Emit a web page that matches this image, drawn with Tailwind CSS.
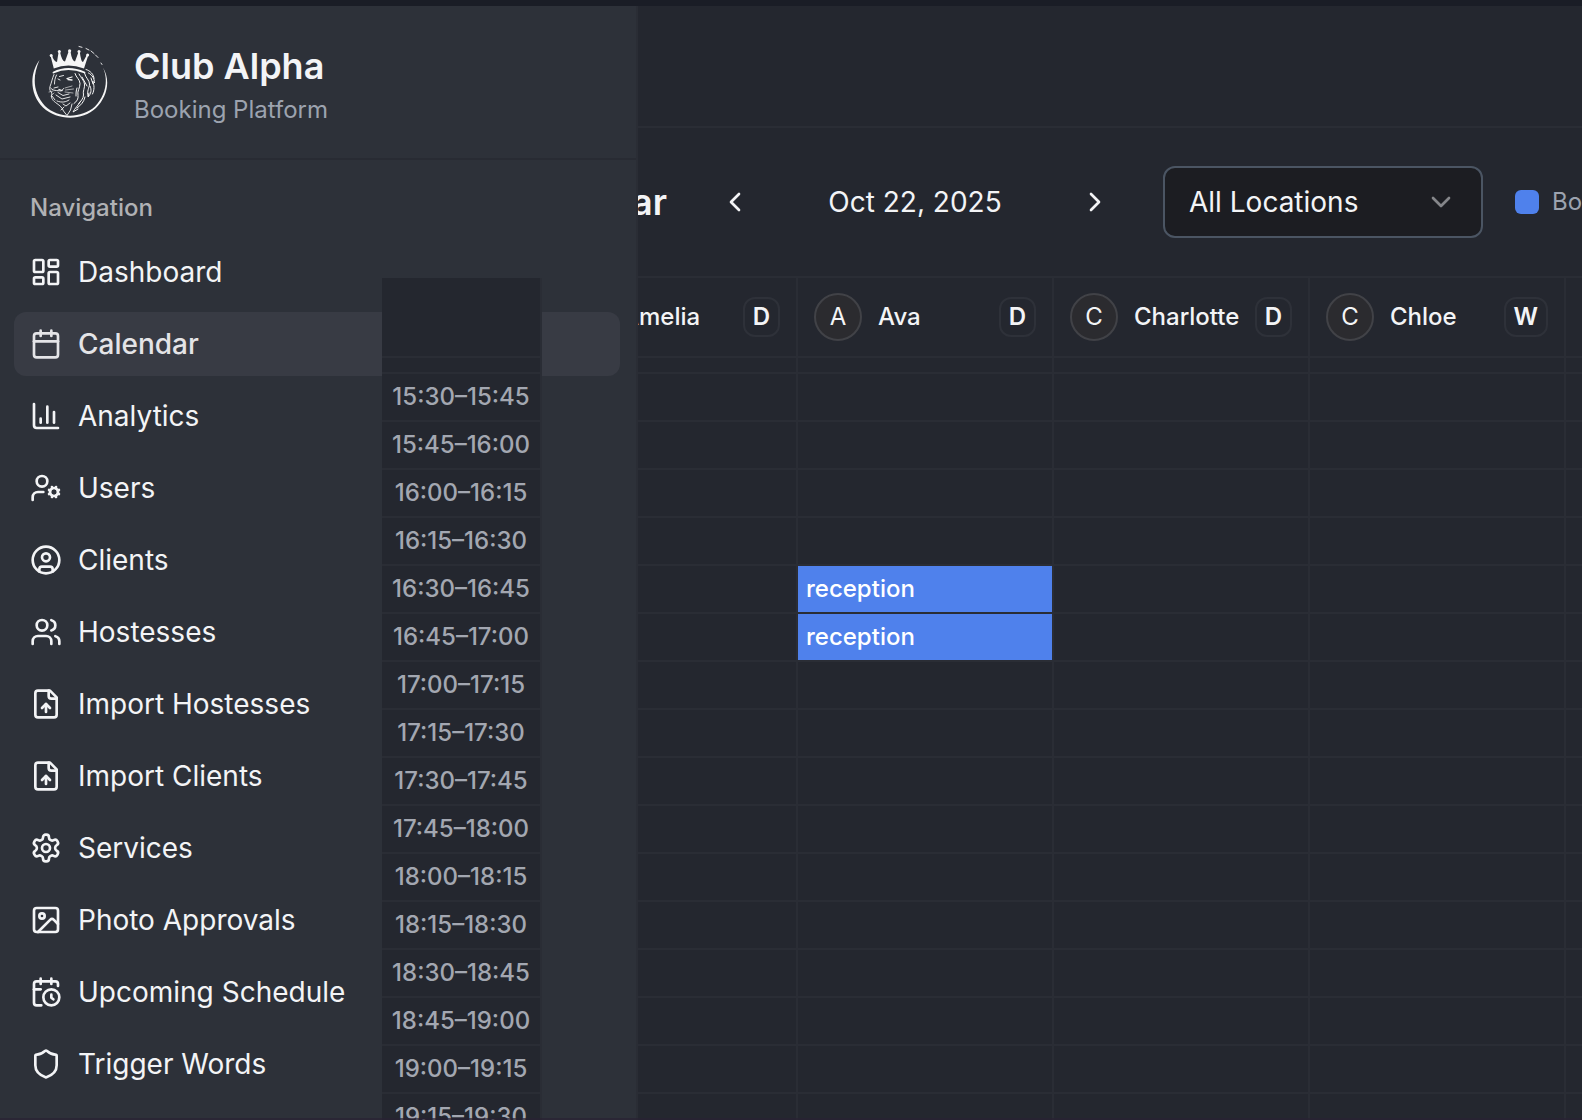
<!DOCTYPE html>
<html lang="en">
<head>
<meta charset="utf-8">
<title>Club Alpha</title>
<script src="https://cdn.jsdelivr.net/npm/@tailwindcss/browser@4"></script>
</head>
<body class="w-[1582px] h-[1120px] overflow-hidden bg-[#24272f] font-[Inter,sans-serif] text-[#f3f4f6]">
<div class="relative flex flex-col h-[1120px] overflow-hidden">
  <div class="h-[6px] shrink-0 bg-[#1a1d26]"></div>
  <div class="flex flex-1 min-h-0">

    <aside class="relative z-10 w-[638px] shrink-0 border-r-2 border-[#2a2d35] bg-[#2d3139]">
      <div class="h-[154px] flex items-start gap-6 pl-[30px] pt-[36px] border-b-2 border-[#282b33]">
        <svg class="w-20 h-20 shrink-0" viewBox="0 0 80 80" fill="none" stroke="#f6f6f6" stroke-linecap="round" stroke-linejoin="round">
          <path stroke="none" fill="#f6f6f6" d="M9.500 18C-1 32 0 53 13 65.500C28 79 52 79 66 66C77 55 81 39 73 25.500C79 39 75 54 65 64.500C51 77 28 76.500 15 64C3 51 2 35 9.500 18Z"/>
          <path stroke-width=".9" d="M49 4.500l3 .8M56 6.500l3 1.500M61 9l3 2.500M65.500 13l2.500 2.500M71 21l1 1.500"/>
          <path stroke="none" fill="#f6f6f6" d="M23.800 26.500L20.600 14L22 13.500Q24 20 27 20L28.600 10H30Q32 19.500 35 19.500L38.800 9H40.400Q42 19.500 45 19.500L48.500 10H49.800Q51 20 53 20L56.800 13L58.200 13.500L54 26.500Q38 20.500 23.800 26.500Z"/>
          <g fill="#f6f6f6" stroke="none"><circle cx="21.200" cy="13.500" r="1.500"/><circle cx="29.300" cy="9.500" r="1.500"/><circle cx="39.600" cy="8.800" r="1.600"/><circle cx="49" cy="9.500" r="1.500"/><circle cx="57.600" cy="13" r="1.500"/></g>
          <path stroke-width="1.800" d="M23.500 30.500Q38 23.500 54.500 30.500"/>
          <path stroke-width=".9" d="M24 32.500C22 37 21.500 41 20 44.500C19 47.500 20.500 49.500 22 51C20.500 55 22 58 25.500 60.500C29 63 32 65 33.500 69L37 73.500L40.500 68L42 62M22 54l3 4M26.500 33c-1.500 3-2 6-2 9M24 46l4-1M20.500 46c2 2 4 2.500 6 2.500l5 .5l2-2.500M28 50.500l5 3l6-1.500M26 53l6 4l8-2M27 59c5 2 9 1 12-1M33 62l3 2l4-3M31 68l3-3M29.500 34.500l4-1M28 37l2 1"/>
          <path stroke-width="1.300" d="M38 37.500l4 .5M37 36.500l5-1.500M29 47.500l3 1"/>
          <path stroke-width=".6" d="M35 46l7-2M35.500 48l8-1M35 50l8 1M23 49l-4 1M24 51l-3 3"/>
          <path stroke-width="1" d="M45 31.500c1 4 5 6 5 10c0 5-3 7-2 12c.5 3-1 6-4 8M49 32c2 4 5 6 5.500 10c.5 4-2 7-1 11c0 4-3 6-5 9M54.500 31c1 5 5 7 5 11c0 4-3 7-1.500 12M56 27.500c4 1 8 5 8 9M58.500 31c4 2 6 6 6 10l-2-2c2 4 2 9 0 13M60 44c2 4 1 8-2 11l1-4M55 55c-1 5-4 8-8 11M50 60c-2 4-5 6-7 10l5-3M61 36l2 6M47 46c-1 3-1 5-1 8M52 35l5 9"/>
        </svg>
        <div>
          <div class="text-[36px] leading-[48px] font-semibold">Club Alpha</div>
          <div class="text-2xl leading-[40px] text-[#9ca3af]">Booking Platform</div>
        </div>
      </div>
      <div class="pt-[16px] pl-[14px] pr-4">
        <div class="h-16 flex items-center pl-4 text-2xl font-medium text-[#b0b1b4]">Navigation</div>
        <nav class="flex flex-col gap-2" id="nav"></nav>
      </div>
    </aside>

    <main class="flex-1 min-w-0 flex flex-col">
      <div class="h-[122px] shrink-0 border-b-2 border-[#2a2d35]"></div>
      <div class="h-[150px] shrink-0 border-b-2 border-[#2a2d35] flex items-center">
        <div class="w-[29px] shrink-0 flex justify-end text-[36px] font-semibold"><span>Calendar</span></div>
        <div class="ml-[52px] w-8 shrink-0"><svg class="w-8 h-8" viewBox="0 0 24 24" fill="none" stroke="currentColor" stroke-width="2" stroke-linecap="round" stroke-linejoin="round"><path d="m15 18-6-6 6-6"/></svg></div>
        <div class="w-[328px] shrink-0 text-center text-[28px]">Oct 22, 2025</div>
        <div class="w-8 shrink-0"><svg class="w-8 h-8" viewBox="0 0 24 24" fill="none" stroke="currentColor" stroke-width="2" stroke-linecap="round" stroke-linejoin="round"><path d="m9 18 6-6-6-6"/></svg></div>
        <div class="ml-[52px] w-80 h-[72px] shrink-0 rounded-xl border-2 border-[#4b5563] bg-[#1c1d22] flex items-center justify-between px-6">
          <span class="text-[28px]">All Locations</span>
          <svg class="w-8 h-8 text-[#85868a]" viewBox="0 0 24 24" fill="none" stroke="currentColor" stroke-width="2" stroke-linecap="round" stroke-linejoin="round"><path d="m6 9 6 6 6-6"/></svg>
        </div>
        <div class="ml-8 w-6 h-6 shrink-0 rounded-[6px] bg-[#4f81ec]"></div>
        <div class="ml-[13px] shrink-0 text-2xl text-[#9ca3af]">Booked</div>
      </div>
      <!-- The first hostess column is partly covered by the sidebar. -->
      <div class="-ml-24 w-[1280px] flex flex-col shrink-0">
        <div class="grid grid-cols-5" id="heads"></div>
        <div class="h-4 grid grid-cols-5" id="stub"></div>
        <div class="flex flex-col" id="rows"></div>
      </div>
    </main>
  </div>

  <div class="absolute z-20 left-[382px] top-[278px] w-[160px] bg-[#24272f]" id="times"></div>
  <div class="absolute z-30 left-0 bottom-0 w-full h-[2px] bg-[#2a2233]/70"></div>
</div>

<script>
  const svg = p => `<svg class="w-8 h-8 shrink-0" viewBox="0 0 24 24" fill="none" stroke="currentColor" stroke-width="2" stroke-linecap="round" stroke-linejoin="round">${p}</svg>`;
  const fileUp = '<path d="M15 2H6a2 2 0 0 0-2 2v16a2 2 0 0 0 2 2h12a2 2 0 0 0 2-2V7Z"/><path d="M14 2v4a2 2 0 0 0 2 2h4"/><path d="M12 12v6"/><path d="m15 15-3-3-3 3"/>';
  const items = [
    ['Dashboard', '<rect width="7" height="9" x="3" y="3" rx="1"/><rect width="7" height="5" x="14" y="3" rx="1"/><rect width="7" height="9" x="14" y="12" rx="1"/><rect width="7" height="5" x="3" y="16" rx="1"/>'],
    ['Calendar', '<path d="M8 2v4"/><path d="M16 2v4"/><rect width="18" height="18" x="3" y="4" rx="2"/><path d="M3 10h18"/>'],
    ['Analytics', '<path d="M3 3v16a2 2 0 0 0 2 2h16"/><path d="M18 17V9"/><path d="M13 17V5"/><path d="M8 17v-3"/>'],
    ['Users', '<path d="M10 15H6a4 4 0 0 0-4 4v2"/><path d="m14.305 16.530.923-.382"/><path d="m15.228 13.852-.923-.383"/><path d="m16.852 12.228-.383-.923"/><path d="m16.852 17.772-.383.924"/><path d="m19.148 12.228.383-.923"/><path d="m19.530 18.696-.382-.924"/><path d="m20.772 13.852.924-.383"/><path d="m20.772 16.148.924.383"/><circle cx="18" cy="15" r="3"/><circle cx="9" cy="7" r="4"/>'],
    ['Clients', '<circle cx="12" cy="12" r="10"/><circle cx="12" cy="10" r="3"/><path d="M7 20.662V19a2 2 0 0 1 2-2h6a2 2 0 0 1 2 2v1.662"/>'],
    ['Hostesses', '<path d="M16 21v-2a4 4 0 0 0-4-4H6a4 4 0 0 0-4 4v2"/><path d="M16 3.128a4 4 0 0 1 0 7.744"/><path d="M22 21v-2a4 4 0 0 0-3-3.870"/><circle cx="9" cy="7" r="4"/>'],
    ['Import Hostesses', fileUp],
    ['Import Clients', fileUp],
    ['Services', '<path d="M12.220 2h-.440a2 2 0 0 0-2 2v.180a2 2 0 0 1-1 1.730l-.430.250a2 2 0 0 1-2 0l-.150-.080a2 2 0 0 0-2.730.730l-.220.380a2 2 0 0 0 .730 2.730l.150.100a2 2 0 0 1 1 1.720v.510a2 2 0 0 1-1 1.740l-.150.090a2 2 0 0 0-.730 2.730l.220.380a2 2 0 0 0 2.730.730l.150-.080a2 2 0 0 1 2 0l.430.250a2 2 0 0 1 1 1.730V20a2 2 0 0 0 2 2h.440a2 2 0 0 0 2-2v-.180a2 2 0 0 1 1-1.730l.430-.250a2 2 0 0 1 2 0l.150.080a2 2 0 0 0 2.730-.730l.220-.390a2 2 0 0 0-.730-2.730l-.150-.080a2 2 0 0 1-1-1.740v-.500a2 2 0 0 1 1-1.740l.150-.090a2 2 0 0 0 .730-2.730l-.220-.380a2 2 0 0 0-2.730-.730l-.150.080a2 2 0 0 1-2 0l-.430-.250a2 2 0 0 1-1-1.730V4a2 2 0 0 0-2-2z"/><circle cx="12" cy="12" r="3"/>'],
    ['Photo Approvals', '<rect width="18" height="18" x="3" y="3" rx="2"/><circle cx="9" cy="9" r="2"/><path d="m21 15-3.086-3.086a2 2 0 0 0-2.828 0L6 21"/>'],
    ['Upcoming Schedule', '<path d="M21 7.500V6a2 2 0 0 0-2-2H5a2 2 0 0 0-2 2v14a2 2 0 0 0 2 2h3.500"/><path d="M16 2v4"/><path d="M8 2v4"/><path d="M3 10h5"/><path d="M17.500 17.500 16 16.300V14"/><circle cx="16" cy="16" r="6"/>'],
    ['Trigger Words', '<path d="M20 13c0 5-3.500 7.500-7.660 8.950a1 1 0 0 1-.670-.010C7.500 20.500 4 18 4 13V6a1 1 0 0 1 1-1c2 0 4.500-1.200 6.240-2.720a1.170 1.170 0 0 1 1.520 0C14.510 3.810 17 5 19 5a1 1 0 0 1 1 1z"/>'],
  ];
  document.getElementById('nav').innerHTML = items.map(([t, p], i) =>
    `<a class="h-16 flex items-center gap-4 pl-4 rounded-xl text-[28px] ${i === 1 ? 'bg-[#383b44] font-medium text-[#e4e4e7]' : ''}">${svg(p)}<span>${t}</span></a>`).join('');

  const people = [['A', 'Amelia', 'D'], ['A', 'Ava', 'D'], ['C', 'Charlotte', 'D'], ['C', 'Chloe', 'W']];
  const line = 'border-r-2 border-b-2 border-[#2a2d35]';
  document.getElementById('heads').innerHTML = people.map(([a, n, b]) =>
    `<div class="h-20 px-4 flex items-center gap-4 ${line}"><span class="w-12 h-12 shrink-0 rounded-full border-2 border-[#414247] bg-[#2b2b2f] text-2xl flex items-center justify-center">${a}</span><span class="flex-1 min-w-0 text-2xl font-medium">${n}</span><span class="h-10 px-2 -ml-4 shrink-0 rounded-xl border-2 border-[#2e3139] text-2xl font-semibold flex items-center">${b}</span></div>`).join('') + `<div class="${line}"></div>`;
  document.getElementById('stub').innerHTML = `<div class="${line}"></div>`.repeat(5);

  const two = n => String(n).padStart(2, '0');
  const fmt = m => two(Math.floor(m / 60)) + ':' + two(m % 60);
  const cell = `<div class="${line}"></div>`;
  let rows = '', times = `<div class="h-20 ${line}"></div><div class="h-4 ${line}"></div>`;
  for (let m = 930; m <= 1155; m += 15) {
    const booked = m === 990 || m === 1005;
    const ava = booked ? `<div class="${line}"><div class="h-full px-2 bg-[#4f81ec] text-white text-2xl font-medium leading-[46px]">reception</div></div>` : cell;
    rows += `<div class="h-12 grid grid-cols-5">${cell}${ava}${cell}${cell}${cell}</div>`;
    times += `<div class="h-12 text-2xl font-medium leading-[46px] text-center text-[#a3a7b1] whitespace-nowrap ${line}">${fmt(m)}–${fmt(m + 15)}</div>`;
  }
  document.getElementById('rows').innerHTML = rows;
  document.getElementById('times').innerHTML = times;
</script>
</body>
</html>
